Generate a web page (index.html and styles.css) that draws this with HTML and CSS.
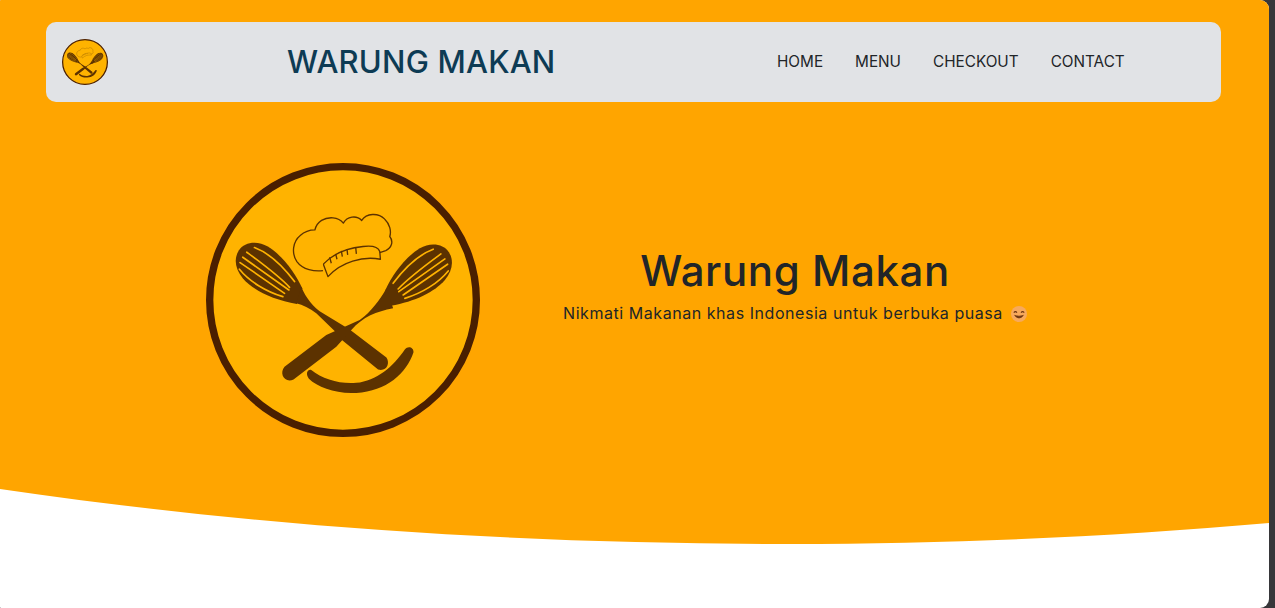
FILE: index.html
```html
<!DOCTYPE html>
<html lang="id">
<head>
<meta charset="utf-8">
<title>Warung Makan</title>
<link rel="stylesheet" href="styles.css">
</head>
<body>
<svg class="defs" width="0" height="0" aria-hidden="true">
  <defs>
    <g id="whisk-head">
      <path class="brown" d="M338 415C318 370 280 318 235 290C205 272 165 275 148 302C132 328 138 358 160 385C190 420 250 450 322 462Z"/>
      <path class="slit" d="M195 293C240 310 285 355 315 395"/>
      <path class="slit" d="M172 307C210 335 265 375 300 412"/>
      <path class="slit" d="M160 322L298 420"/>
      <path class="slit" d="M152 338L285 430"/>
      <path class="slit" d="M150 358C180 395 230 425 280 440"/>
    </g>
    <g id="brand-mark">
      <circle class="disc" cx="460" cy="450" r="399"/>
      <use href="#whisk-head"/>
      <use href="#whisk-head" transform="translate(925 5) scale(-1 1)"/>
      <path class="brown" d="M335 410C350 445 370 470 400 490L480 538L590 622C602 640 590 665 565 658L455 568L435 543L380 490C360 475 340 465 320 460Z"/>
      <path class="brown" d="M590 415C570 450 545 485 510 510L470 528L410 555L285 650C268 670 285 700 312 688L440 590L485 540C520 500 560 485 610 475Z"/>
      <path class="brown" d="M364 659C400 688 450 702 500 698C560 692 610 650 645 598C655 585 672 592 671 606C650 670 590 722 500 728C440 732 385 712 358 686C348 672 352 658 364 659Z"/>
      <path class="hat" d="M400 362C375 365 340 360 322 335C305 310 310 275 332 257C345 245 362 240 376 240C382 215 405 202 430 204C445 205 455 212 461 220C472 200 500 195 516 212C530 190 565 188 585 208C600 222 605 245 600 260C612 275 605 295 588 302L570 308"/>
      <path class="hat" d="M402 342C430 312 470 295 520 290C545 287 565 290 570 305L572 328C520 318 455 335 415 380L402 345Z"/>
      <path class="hat" d="M420 322L425 340M438 312L442 328M455 303L458 320M472 298L474 315M498 292L500 312"/>
    </g>
  </defs>
</svg>
<div class="window">
  <section class="hero">
    <nav class="navbar">
      <svg class="nav-logo" viewBox="50 40 820 820" role="img" aria-label="Logo"><use href="#brand-mark"/></svg>
      <a class="brand" href="#">WARUNG MAKAN</a>
      <ul class="nav-links">
        <li><a href="#">HOME</a></li>
        <li><a href="#">MENU</a></li>
        <li><a href="#">CHECKOUT</a></li>
        <li><a href="#">CONTACT</a></li>
      </ul>
    </nav>
    <div class="hero-body">
      <svg class="hero-logo" viewBox="50 40 820 820" role="img" aria-label="Warung Makan"><use href="#brand-mark"/></svg>
      <div class="hero-text">
        <h1>Warung Makan</h1>
        <p>Nikmati Makanan khas Indonesia untuk berbuka puasa <svg class="emoji" viewBox="0 0 16 16" aria-hidden="true"><circle cx="8" cy="8" r="8" fill="#f7a95c"/><path d="M2.8 6.6Q4.4 4.6 6 6.6M10 6.6Q11.6 4.6 13.2 6.6" fill="none" stroke="#6b3410" stroke-width="1.1"/><path d="M3.6 9.4Q8 14.6 12.4 9.4Q8 11 3.6 9.4Z" fill="#6b3410" stroke="#6b3410" stroke-width=".7"/></svg></p>
      </div>
    </div>
  </section>
  <svg class="wave" viewBox="0 0 1269 55" preserveAspectRatio="none" aria-hidden="true">
    <path d="M0 0C260 38 520 55 790 55C960 55 1120 47 1269 34V0Z"/>
  </svg>
</div>
</body>
</html>
```
FILE: styles.css
```css
* { box-sizing: border-box; }
html, body { margin: 0; height: 100%; overflow: hidden; }
body {
  background: #37373a;
  font-family: "Inter", "Open Sans", sans-serif;
  color: #212529;
}
.defs { display: block; height: 0; }
.window {
  width: 1269px;
  height: 608px;
  background: #fff;
  overflow: hidden;
  border-radius: 1px 9px 9px 1px;
}
.hero {
  background: #ffa500;
  height: 489px;
  padding-top: 22px;
}
.navbar {
  display: flex;
  align-items: center;
  width: 1175px;
  height: 80px;
  margin-left: 46px;
  padding-left: 16px;
  background: #e1e3e6;
  border-radius: 10px;
}
.nav-logo { width: 46px; height: 46px; flex: none; }
.brand {
  margin-left: 179px;
  margin-top: -2px;
  width: 268px;
  flex: none;
  font-size: 31px;
  font-weight: 500;
  letter-spacing: .2px;
  white-space: nowrap;
  color: #0d3b54;
  text-decoration: none;
}
.nav-links {
  display: flex;
  gap: 32px;
  list-style: none;
  margin: -2px 0 0 222px;
  padding: 0;
}
.nav-links a {
  font-size: 15.3px;
  color: #212529;
  text-decoration: none;
  white-space: nowrap;
}
.hero-body {
  display: flex;
  align-items: center;
  height: 274px;
  margin-top: 61px;
  padding-left: 206px;
}
.hero-logo { width: 274px; height: 274px; flex: none; }
.hero-text {
  margin-left: 83px;
  width: 464px;
  text-align: center;
  margin-top: -28px;
}
.hero-text h1 {
  margin: 0;
  font-size: 42px;
  font-weight: 500;
  line-height: 48px;
  letter-spacing: .6px;
}
.hero-text p {
  margin: 6px 0 0;
  font-size: 16px;
  line-height: 24px;
  letter-spacing: .55px;
  white-space: nowrap;
}
.emoji { width: 16px; height: 16px; margin-left: 3px; vertical-align: -3px; }
.wave { display: block; width: 1269px; height: 55px; }
.wave path { fill: #ffa500; }
.disc { fill: #ffb300; stroke: #4a1f00; stroke-width: 22; }
.brown { fill: #5c3200; }
.slit { fill: none; stroke: #ffb300; stroke-width: 5; stroke-linecap: round; }
.hat { fill: none; stroke: #5c3200; stroke-width: 4; stroke-linejoin: round; }
```
